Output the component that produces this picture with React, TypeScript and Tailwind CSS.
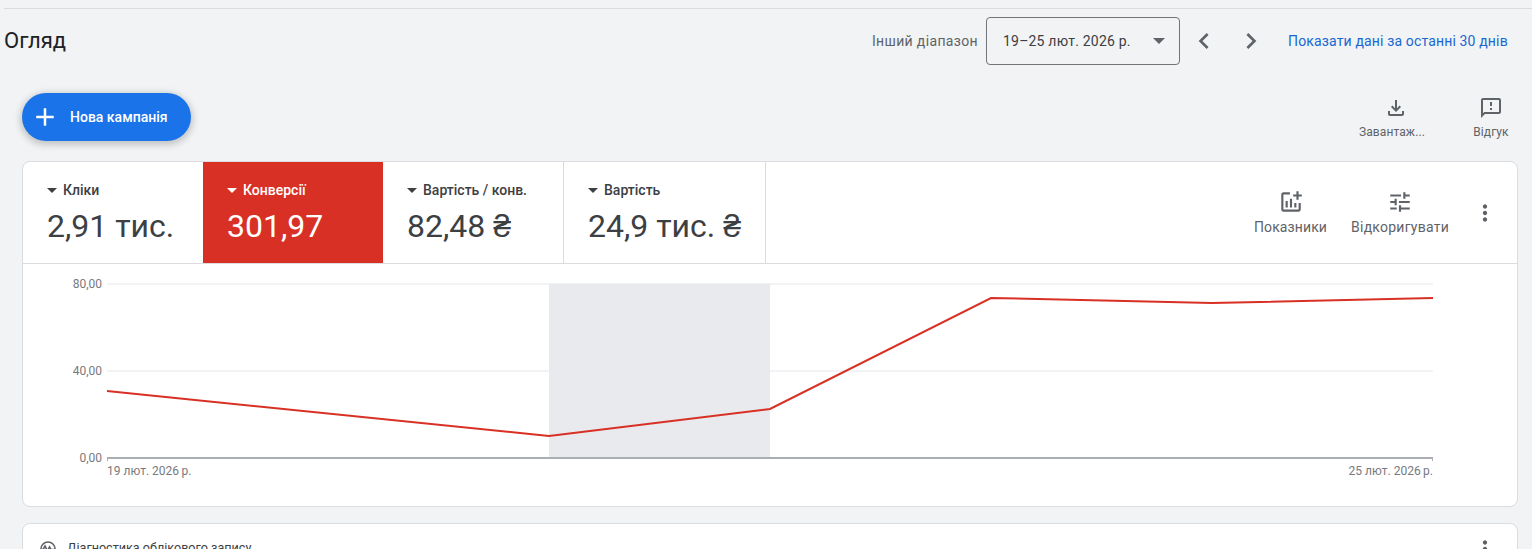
const ROBOTO = "font-['Roboto',sans-serif]";

const metrics = [
  { label: "Кліки", value: "2,91 тис.", width: "w-[180px]", active: false, border: false },
  { label: "Конверсії", value: "301,97", width: "w-[180px]", active: true, border: false },
  { label: "Вартість / конв.", value: "82,48 ₴", width: "w-[181px]", active: false, border: true },
  { label: "Вартість", value: "24,9 тис. ₴", width: "w-[202px]", active: false, border: true },
];

const linePoints = "84,127 526,172 747,145 968,34 1189,39 1410,34";

function Icon({ d, className }: { d: string; className?: string }) {
  return (
    <svg viewBox="0 0 24 24" className={className} fill="currentColor">
      <path d={d} />
    </svg>
  );
}

function MoreVert({ className }: { className?: string }) {
  return (
    <Icon
      className={className}
      d="M12 8c1.1 0 2-.9 2-2s-.9-2-2-2-2 .9-2 2 .9 2 2 2zm0 2c-1.1 0-2 .9-2 2s.9 2 2 2 2-.9 2-2-.9-2-2-2zm0 6c-1.1 0-2 .9-2 2s.9 2 2 2 2-.9 2-2-.9-2-2-2z"
    />
  );
}

function Header() {
  return (
    <header className="flex h-[64px] items-center pl-1 pr-6">
      <h1 className="text-[22px] leading-none text-[#202124]">Огляд</h1>
      <div className="ml-auto flex items-center">
        <span className="mr-2 text-[14px] tracking-[0.35px] text-[#5f6368]">Інший діапазон</span>
        <div className="flex h-[48px] w-[194px] items-center justify-between rounded border border-[#70757a] pl-4 pr-[14px]">
          <span className="text-[14px] tracking-[0.2px] text-[#3c4043]">19–25 лют. 2026 р.</span>
          <span className="h-0 w-0 border-x-[6px] border-t-[6px] border-x-transparent border-t-[#5f6368]" />
        </div>
        <Icon className="ml-2 h-8 w-8 text-[#5f6368]" d="M15.41 7.41 14 6l-6 6 6 6 1.41-1.41L10.83 12z" />
        <Icon className="ml-[15px] h-8 w-8 text-[#5f6368]" d="M10 6 8.59 7.41 13.17 12l-4.58 4.59L10 18l6-6z" />
        <a className="ml-[21px] w-[220px] whitespace-nowrap text-[14px] tracking-[0.15px] text-[#1967d2]">
          Показати дані за останні 30 днів
        </a>
      </div>
    </header>
  );
}

function Toolbar() {
  return (
    <div className="flex h-[88px] items-start px-[22px] pt-[20px]">
      <button className="flex h-[48px] w-[169px] items-center rounded-full bg-[#1a73e8] pl-[8px] text-white shadow-[0_2px_6px_2px_rgba(60,64,67,0.25)]">
        <Icon className="h-[30px] w-[30px]" d="M19 13h-6v6h-2v-6H5v-2h6V5h2v6h6v2z" />
        <span className="ml-[10px] text-[14px] font-medium">Нова кампанія</span>
      </button>
      <div className="ml-auto flex items-start text-[12px] leading-4 text-[#5f6368]">
        <div className="flex w-[74px] flex-col items-center pt-[3px]">
          <Icon
            className="h-6 w-6"
            d="M18 15v3H6v-3H4v3c0 1.1.9 2 2 2h12c1.1 0 2-.9 2-2v-3h-2zm-1-4-1.41-1.41L13 12.17V4h-2v8.17L8.41 9.59 7 11l5 5 5-5z"
          />
          <span className="mt-[4px] self-start whitespace-nowrap tracking-[0.1px]">Завантаж...</span>
        </div>
        <div className="ml-[39px] flex w-[38px] flex-col items-center pt-[3px]">
          <Icon
            className="h-6 w-6"
            d="M20 2H4c-1.1 0-1.99.9-1.99 2L2 22l4-4h14c1.1 0 2-.9 2-2V4c0-1.1-.9-2-2-2zm0 14H5.17L4 17.17V4h16v12zm-9-4h2v2h-2zm0-6h2v4h-2z"
          />
          <span className="mt-[4px] tracking-[0.1px]">Відгук</span>
        </div>
      </div>
    </div>
  );
}

function MetricTabs() {
  return (
    <div className="flex h-[102px] border-b border-[#dadce0]">
      {metrics.map((m) => (
        <div
          key={m.label}
          className={`flex ${m.width} flex-col pl-6 pt-[20px] ${m.active ? "bg-[#d93025] text-white" : "text-[#3c4043]"} ${
            m.border ? "border-r border-[#dadce0]" : ""
          }`}
        >
          <div className="flex h-[16px] items-center whitespace-nowrap text-[14px] font-medium">
            <span
              className={`mr-[6px] h-0 w-0 border-x-[5px] border-t-[5px] border-x-transparent ${
                m.active ? "border-t-white" : "border-t-[#3c4043]"
              }`}
            />
            {m.label}
          </div>
          <div className="mt-[8px] whitespace-nowrap text-[32px] leading-[40px]">{m.value}</div>
        </div>
      ))}
      <div className="ml-auto flex items-start pt-[27px] text-[14px] leading-4 text-[#5f6368]">
        <div className="flex w-[73px] flex-col items-center">
          <Icon
            className="h-[26px] w-[26px]"
            d="M22 5v2h-3v3h-2V7h-3V5h3V2h2v3h3zm-3 14H5V5h6V3H5c-1.1 0-2 .9-2 2v14c0 1.1.9 2 2 2h14c1.1 0 2-.9 2-2v-6h-2v6zm-4-6v4h2v-4h-2zm-4 4h2V9h-2v8zm-2 0v-6H7v6h2z"
          />
          <span className="mt-[4px] tracking-[0.1px]">Показники</span>
        </div>
        <div className="ml-[24px] flex w-[98px] flex-col items-center">
          <Icon
            className="h-[26px] w-[26px]"
            d="M3 17v2h6v-2H3zM3 5v2h10V5H3zm10 16v-2h8v-2h-8v-2h-2v6h2zM7 9v2H3v2h4v2h2V9H7zm14 4v-2H11v2h10zm-6-4h2V7h4V5h-4V3h-2v6z"
          />
          <span className="mt-[4px] whitespace-nowrap tracking-[0.25px]">Відкоригувати</span>
        </div>
        <MoreVert className="ml-[23px] mr-[19px] mt-[11px] h-[26px] w-[26px]" />
      </div>
    </div>
  );
}

function Chart() {
  return (
    <svg width="1494" height="242" className={`block ${ROBOTO}`}>
      <line x1="84" x2="1410" y1="20" y2="20" stroke="#f1f3f4" strokeWidth="2" />
      <line x1="84" x2="1410" y1="107" y2="107" stroke="#f1f3f4" strokeWidth="2" />
      <rect x="526" y="20" width="221" height="174" fill="#e8eaed" />
      <line x1="84" x2="1410" y1="194" y2="194" stroke="#aaaeb2" strokeWidth="2" />
      <line x1="84.5" x2="84.5" y1="193" y2="197" stroke="#aaaeb2" />
      <line x1="1409.5" x2="1409.5" y1="193" y2="197" stroke="#aaaeb2" />
      <polyline points={linePoints} fill="none" stroke="#d93025" strokeWidth="2" />
      <g fontSize="12" fill="#5f6368" opacity="0.85">
        <text x="79" y="24" textAnchor="end">80,00</text>
        <text x="79" y="111" textAnchor="end">40,00</text>
        <text x="79" y="198" textAnchor="end">0,00</text>
        <text x="84" y="211">19 лют. 2026{"\u2009"}р.</text>
        <text x="1410" y="211" textAnchor="end">25 лют. 2026{"\u2009"}р.</text>
      </g>
    </svg>
  );
}

export default function App() {
  return (
    <div className={`h-[549px] w-[1532px] overflow-hidden bg-[#f1f3f4] pt-2 ${ROBOTO}`}>
      <div className="ml-1 border-t border-[#dadce0]" />
      <Header />
      <Toolbar />
      <section className="ml-[22px] mr-[14px] overflow-hidden rounded-lg border border-[#dadce0] bg-white">
        <MetricTabs />
        <Chart />
      </section>
      <section className="ml-[22px] mr-[14px] mt-4 flex h-[60px] items-start rounded-lg border border-[#dadce0] bg-white pl-4 pt-[15px] text-[#3c4043]">
        <svg viewBox="0 0 18 18" className="h-[18px] w-[18px] text-[#5f6368]" fill="none" stroke="currentColor" strokeWidth="1.6">
          <path d="M2 10a7 7 0 0 1 14 0" />
          <path d="M1 10.5h3l2-3.5 2.5 5 2-4 1.5 2.5H17" />
        </svg>
        <span className="ml-[10px] text-[12.6px] leading-[18px]">Діагностика облікового запису</span>
        <MoreVert className="-mt-[3px] ml-auto mr-[19px] h-[26px] w-[26px] text-[#5f6368]" />
      </section>
    </div>
  );
}
